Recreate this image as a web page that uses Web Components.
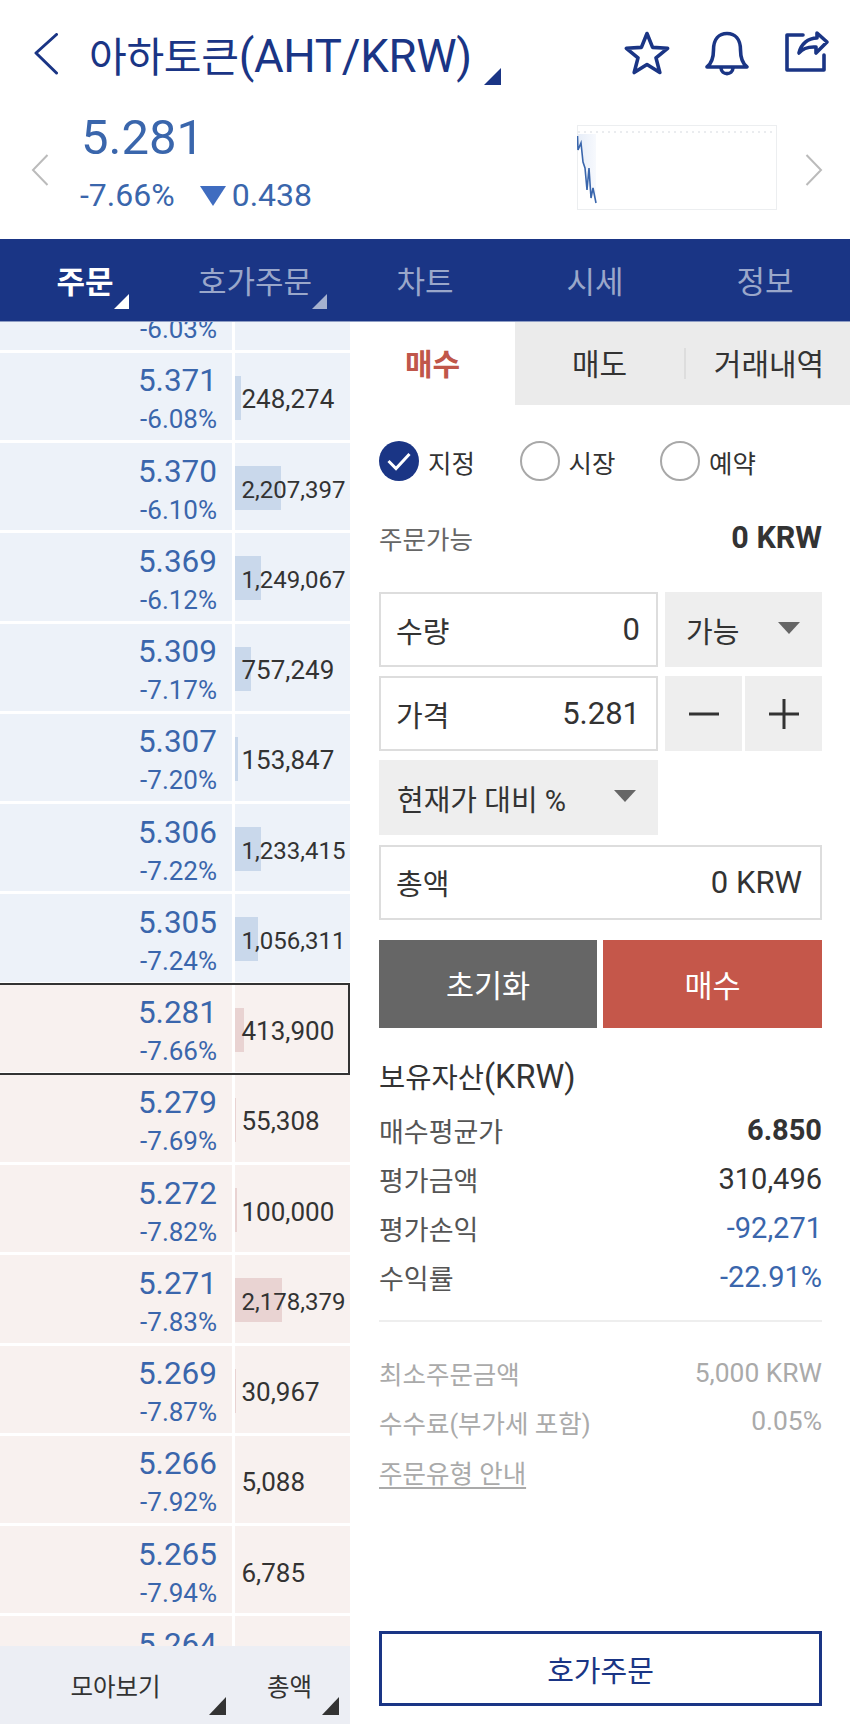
<!DOCTYPE html>
<html lang="ko">
<head>
<meta charset="utf-8">
<title>주문</title>
<style>
  html, body { margin: 0; padding: 0; background: #fff; }
  body { width: 850px; height: 1724px; overflow: hidden; font-family: Roboto, "Noto Sans CJK KR", sans-serif; color: #333; }
  .app { display: flex; flex-direction: column; width: 850px; height: 1724px; }
  .main { display: flex; flex: 1; min-height: 0; }
</style>
</head>
<body>
<div class="app">
  <coin-header name="아하토큰" pair="(AHT/KRW)"></coin-header>
  <coin-quote price="5.281" rate="-7.66%" diff="0.438"></coin-quote>
  <main-tabs></main-tabs>
  <div class="main">
    <order-book></order-book>
    <order-panel></order-panel>
  </div>
</div>

<script>
class CoinHeader extends HTMLElement {
    constructor() {
        super();
        this.attachShadow({ mode: "open" });
        this.shadowRoot.innerHTML = `
            <style>
                :host { display: flex; align-items: flex-start; height: 101px; color: #1a3585; }
                .back { margin: 33px 0 0 34px; width: 24px; height: 42px; stroke-width: 3; }
                .name { margin: 31px 0 0 31px; font-size: 41px; line-height: 52px; white-space: nowrap; letter-spacing: -0.3px; }
                .name span { font-size: 45.5px; }
                .corner { width: 0; height: 0; margin: 68px 0 0 12px; border-left: 17px solid transparent; border-bottom: 17px solid #1a3585; }
                .icons { display: flex; margin-left: auto; }
                svg { display: block; fill: none; stroke: currentColor; stroke-width: 3.6; stroke-linecap: round; stroke-linejoin: round; }
                .icons svg { width: 46px; height: 46px; margin-top: 30px; }
                .star { margin-right: 34px; }
                .bell { margin-right: 34px; }
                .share { margin-right: 20px; }
            </style>
            <svg class="back" viewBox="0 0 24 42"><path d="M22.5 1.5 L2 20 L22.5 40"/></svg>
            <div class="name">${this.getAttribute("name")}<span>${this.getAttribute("pair")}</span></div>
            <div class="corner"></div>
            <div class="icons">
                <svg class="star" viewBox="0 0 46 46"><path d="M23 3.5 L28.6 17.4 L43.6 18.3 L32 27.9 L35.8 42.5 L23 34.5 L10.2 42.5 L14 27.9 L2.4 18.3 L17.4 17.4 Z"/></svg>
                <svg class="bell" viewBox="0 0 46 46"><path d="M3 37 C8 33 9.500 28 9.500 20 C9.500 9 15 3.500 23 3.500 C31 3.500 36.500 9 36.500 20 C36.500 28 38 33 43 37 Z"/><path d="M17 38 C17.500 45.500 28.500 45.500 29 38"/></svg>
                <svg class="share" viewBox="0 0 46 46"><path d="M19 5 H3 V40 H40 V25"/><path d="M33 3 L43 12 L32 23 V17 C24 16.500 19 18 15 23 C17 14 24 8 33 8 Z"/></svg>
            </div>
        `;
    }
}

class CoinQuote extends HTMLElement {
    constructor() {
        super();
        this.attachShadow({ mode: "open" });
        this.shadowRoot.innerHTML = `
            <style>
                :host { display: flex; align-items: center; height: 138px; color: #3a66ac; }
                svg { display: block; fill: none; }
                .arrow { width: 18px; height: 32px; stroke: #bbb; stroke-width: 2; }
                .left { margin: 0 0 0 31px; }
                .vals { margin-left: 31px; display: flex; flex-direction: column; align-self: flex-start; }
                .price { font-size: 49px; line-height: 58px; margin: 8px 0 0 1px; }
                .sub { display: flex; align-items: center; font-size: 32px; line-height: 40px; margin-top: 8px; }
                .tri { width: 0; height: 0; margin: 2px 6px 0 25px; border-left: 13px solid transparent; border-right: 13px solid transparent; border-top: 20px solid #3f6cc0; }
                .spark { margin: 0 0 6px auto; width: 200px; height: 85px; }
                .right { margin: 0 27px 0 28px; }
            </style>
            <svg class="arrow left" viewBox="0 0 18 32"><path d="M16.500 1 L2 16 L16.500 31"/></svg>
            <div class="vals">
                <div class="price">${this.getAttribute("price")}</div>
                <div class="sub"><span>${this.getAttribute("rate")}</span><span class="tri"></span><span>${this.getAttribute("diff")}</span></div>
            </div>
            <svg class="spark" viewBox="0 0 200 85">
                <defs><linearGradient id="sh" x1="0" y1="0" x2="1" y2="0"><stop offset="0" stop-color="#e6edf8"/><stop offset="1" stop-color="#f7f9fd"/></linearGradient></defs>
                <rect x="0.5" y="0.5" width="199" height="84" stroke="#eceef0"/>
                <path d="M1 7 H199" stroke="#e4e6ea" stroke-width="1.500" stroke-dasharray="2 4"/>
                <path d="M1 9 L1 25 L4 18 L6 37 L8 43 L10 65 L12 43 L14 73 L16 63 L19 78 L19 9 Z" fill="url(#sh)"/>
                <path d="M0.500 11 L1 25 L4 18 L6 37 L8 43 L10 65 L12 43 L14 73 L16 63 L19 78" stroke="#3a66ac" stroke-width="1.600"/>
            </svg>
            <svg class="arrow right" viewBox="0 0 18 32"><path d="M1.500 1 L16 16 L1.500 31"/></svg>
        `;
    }
}

class MainTabs extends HTMLElement {
    constructor() {
        super();
        this.attachShadow({ mode: "open" });
        const items = [["주문", 1, 1], ["호가주문", 0, 1], ["차트", 0, 0], ["시세", 0, 0], ["정보", 0, 0]];
        this.shadowRoot.innerHTML = `
            <style>
                :host { display: grid; grid-template-columns: repeat(5, 170px); height: 82px; background: #1a3585; box-shadow: 0 1px 0 #8e9dc4; position: relative; z-index: 2; }
                .tab { display: flex; align-items: center; justify-content: center; position: relative; font-size: 31px; color: #9aa7ca; padding-bottom: 2px; }
                .tab.on { color: #fff; font-weight: 700; }
                .tab i { position: absolute; right: 13px; bottom: 12px; width: 0; height: 0; border-left: 15px solid transparent; border-bottom: 15px solid #a5b1cf; }
                .tab.on i { right: 41px; border-bottom-color: #fff; }
            </style>
            ${items.map(([t, on, mark]) => `<div class="tab${on ? " on" : ""}"><span>${t}</span>${mark ? "<i></i>" : ""}</div>`).join("")}
        `;
    }
}

class OrderRow extends HTMLElement {
    constructor() {
        super();
        this.attachShadow({ mode: "open" });
        const long = (this.getAttribute("vol") || "").length > 7;
        const current = this.hasAttribute("current");
        this.shadowRoot.innerHTML = `
            <style>
                :host { display: grid; grid-template-columns: 232px 115px; grid-template-rows: 87.25px; column-gap: 3px; height: 87.25px; margin-bottom: 3px; position: relative; color: #3a66ac; --cell: #edf2f9; --bar: #c9d8eb; }
                :host([side="sell"]) { --cell: #f8f1ef; --bar: #e9d3d2; }
                :host([current]) { z-index: 1; }
                .p { background: var(--cell); text-align: right; padding-right: 15px; overflow: hidden; }
                .price { font-size: 31.500px; line-height: 38px; height: 38px; margin-top: 9.500px; }
                .rate { font-size: 26px; line-height: 32px; margin-top: 3px; }
                .v { background: var(--cell); position: relative; color: #333; display: flex; align-items: center; }
                .bar { position: absolute; left: 0; top: 23px; height: 44px; background: var(--bar); }
                .num { position: relative; margin: 6px 0 0 6.500px; font-size: ${long ? 24 : 26}px; white-space: nowrap; }
                .frame { position: absolute; left: -3px; right: 0; top: -2px; bottom: -3.500px; border: 2.500px solid #333; }
            </style>
            <div class="p">
                <div class="price">${this.getAttribute("price") || ""}</div>
                <div class="rate">${this.getAttribute("rate") || ""}</div>
            </div>
            <div class="v">
                <div class="bar" style="width:${this.getAttribute("bar") || 0}px"></div>
                <div class="num">${this.getAttribute("vol") || ""}</div>
            </div>
            ${current ? `<div class="frame"></div>` : ""}
        `;
    }
}

class OrderBook extends HTMLElement {
    constructor() {
        super();
        this.attachShadow({ mode: "open" });
        const rows = [
            ["", "-6.03%", "", 0, "buy"],
            ["5.371", "-6.08%", "248,274", 6, "buy"],
            ["5.370", "-6.10%", "2,207,397", 46, "buy"],
            ["5.369", "-6.12%", "1,249,067", 26, "buy"],
            ["5.309", "-7.17%", "757,249", 16, "buy"],
            ["5.307", "-7.20%", "153,847", 3, "buy"],
            ["5.306", "-7.22%", "1,233,415", 26, "buy"],
            ["5.305", "-7.24%", "1,056,311", 23, "buy"],
            ["5.281", "-7.66%", "413,900", 9, "sell", 1],
            ["5.279", "-7.69%", "55,308", 1, "sell"],
            ["5.272", "-7.82%", "100,000", 2, "sell"],
            ["5.271", "-7.83%", "2,178,379", 47, "sell"],
            ["5.269", "-7.87%", "30,967", 1, "sell"],
            ["5.266", "-7.92%", "5,088", 0, "sell"],
            ["5.265", "-7.94%", "6,785", 0, "sell"],
            ["5.264", "", "", 0, "sell"]
        ];
        this.shadowRoot.innerHTML = `
            <style>
                :host { display: flex; flex-direction: column; width: 350px; min-height: 0; }
                .scroll { flex: 1; min-height: 0; overflow: hidden; }
                .list { margin-top: -58.500px; }
                .foot { display: grid; grid-template-columns: 235px 115px; height: 78px; background: #eceef4; color: #333; font-size: 24.500px; flex: none; }
                .foot div { display: flex; align-items: center; justify-content: center; position: relative; }
                .foot i { position: absolute; top: 51px; width: 0; height: 0; border-left: 17px solid transparent; border-bottom: 18px solid #333; }
                .foot .a i { right: 9px; }
                .foot .b i { right: 11px; }
                .foot .a span { margin-left: -4px; }
                .foot .b span { margin-left: -6px; }
            </style>
            <div class="scroll"><div class="list">
                ${rows.map(r => `<order-row price="${r[0]}" rate="${r[1]}" vol="${r[2]}" bar="${r[3]}" side="${r[4]}"${r[5] ? " current" : ""}></order-row>`).join("")}
            </div></div>
            <div class="foot">
                <div class="a"><span>모아보기</span><i></i></div>
                <div class="b"><span>총액</span><i></i></div>
            </div>
        `;
    }
}

class FieldBox extends HTMLElement {
    constructor() {
        super();
        this.attachShadow({ mode: "open" });
        this.shadowRoot.innerHTML = `
            <style>
                :host { display: flex; align-items: center; justify-content: space-between; box-sizing: border-box; height: 75px; border: 2px solid #ddd; padding: 0 16px 0 15px; background: #fff; color: #333; }
                :host(.wide) { padding-right: 18px; }
                .l { font-size: 29px; }
                .v { font-size: 31px; }
            </style>
            <span class="l">${this.getAttribute("label")}</span>
            <span class="v">${this.getAttribute("value")}</span>
        `;
    }
}

class SelectBox extends HTMLElement {
    constructor() {
        super();
        this.attachShadow({ mode: "open" });
        this.shadowRoot.innerHTML = `
            <style>
                :host { display: flex; align-items: center; justify-content: space-between; box-sizing: border-box; height: 75px; padding: 0 22px 0 18px; background: #eee; color: #333; font-size: 29px; }
                i { width: 0; height: 0; margin-top: -4px; border-left: 11px solid transparent; border-right: 11px solid transparent; border-top: 12px solid #666; }
            </style>
            <span><slot></slot></span><i></i>
        `;
    }
}

class RadioItem extends HTMLElement {
    constructor() {
        super();
        this.attachShadow({ mode: "open" });
        const on = this.hasAttribute("checked");
        this.shadowRoot.innerHTML = `
            <style>
                :host { display: flex; align-items: center; gap: 9px; font-size: 25.500px; color: #333; }
                svg { display: block; width: 40px; height: 40px; }
            </style>
            <svg viewBox="0 0 40 40">
                ${on ? `<circle cx="20" cy="20" r="20" fill="#1a3585"/><path d="M9.500 20 L17 27.500 L30.500 13" fill="none" stroke="#fff" stroke-width="3"/>`
                     : `<circle cx="20" cy="20" r="19" fill="#fff" stroke="#a8a8a8" stroke-width="2"/>`}
            </svg>
            <span><slot></slot></span>
        `;
    }
}

class InfoRow extends HTMLElement {
    constructor() {
        super();
        this.attachShadow({ mode: "open" });
        this.shadowRoot.innerHTML = `
            <style>
                :host { display: flex; align-items: center; justify-content: space-between; height: 49px; font-size: 27px; color: #555; }
                :host([muted]) { height: 48.500px; color: #aaa; font-size: 25.500px; }
                .v { font-size: 29px; color: #333; }
                :host([muted]) .v { font-size: 26.400px; color: #aaa; }
                :host([tone="blue"]) .v { color: #3a66ac; }
                :host([tone="bold"]) .v { font-weight: 700; }
            </style>
            <span>${this.getAttribute("label")}</span>
            <span class="v">${this.getAttribute("value")}</span>
        `;
    }
}

class OrderPanel extends HTMLElement {
    constructor() {
        super();
        this.attachShadow({ mode: "open" });
        this.shadowRoot.innerHTML = `
            <style>
                :host { display: flex; flex-direction: column; width: 500px; position: relative; }
                .tabs { display: grid; grid-template-columns: 165px 169px 166px; height: 83px; margin-top: 1px; font-size: 30px; color: #333; flex: none; }
                .tabs div { display: flex; align-items: center; justify-content: center; background: #ebebeb; padding-bottom: 4px; }
                .tabs .on { background: #fff; color: #c0564a; font-weight: 700; }
                .tabs .last { position: relative; padding-left: 4px; }
                .tabs .last::before { content: ""; position: absolute; left: 0; top: 26px; height: 31px; width: 2px; background: #ddd; }
                .body { display: flex; flex-direction: column; flex: 1; padding: 0 28px 18px 29px; }
                .radios { display: flex; margin-top: 36px; height: 40px; }
                .radios radio-item { width: 140.500px; }
                .avail { display: flex; justify-content: space-between; align-items: center; margin-top: 36px; height: 40px; font-size: 25.500px; color: #666; }
                .avail b { font-size: 30.500px; color: #333; }
                .form { display: grid; grid-template-columns: 279px 157px; column-gap: 7px; row-gap: 9.200px; margin-top: 35px; }
                .wide { grid-column: 1 / 3; }
                .step { display: grid; grid-template-columns: 77px 77px; column-gap: 3px; }
                .step div { background: #eee; display: flex; align-items: center; justify-content: center; }
                .step svg { width: 30px; height: 30px; stroke: #333; stroke-width: 3; }
                .btns { display: grid; grid-template-columns: 218px 219px; column-gap: 6px; height: 88px; margin-top: 20px; }
                .btns div { display: flex; align-items: center; justify-content: center; color: #fff; font-size: 30.500px; }
                .reset { background: #666; }
                .buy { background: #c5574a; }
                h2 { margin: 29px 0 0; height: 40px; line-height: 40px; font-size: 28.500px; font-weight: 400; color: #333; }
                h2 span { font-size: 32.500px; }
                .assets { margin-top: 9px; }
                hr { margin: 18px 0 0; border: 0; height: 2px; background: #eee; }
                .fees { margin-top: 27px; }
                .guide { margin-top: 6px; font-size: 25.500px; line-height: 44px; color: #aaa; text-decoration: underline; text-underline-offset: 4px; }
                .hoga { margin-top: auto; box-sizing: border-box; height: 75px; border: 3px solid #1a3585; color: #1a3585; font-size: 29px; display: flex; align-items: center; justify-content: center; }
            </style>
            <div class="tabs">
                <div class="on">매수</div>
                <div>매도</div>
                <div class="last">거래내역</div>
            </div>
            <div class="body">
                <div class="radios">
                    <radio-item checked>지정</radio-item>
                    <radio-item>시장</radio-item>
                    <radio-item>예약</radio-item>
                </div>
                <div class="avail"><span>주문가능</span><b>0 KRW</b></div>
                <div class="form">
                    <field-box label="수량" value="0"></field-box>
                    <select-box style="padding-left:21px">가능</select-box>
                    <field-box label="가격" value="5.281"></field-box>
                    <div class="step">
                        <div><svg viewBox="0 0 30 30"><path d="M0 15 H30"/></svg></div>
                        <div><svg viewBox="0 0 30 30"><path d="M0 15 H30 M15 0 V30"/></svg></div>
                    </div>
                    <select-box>현재가 대비 %</select-box>
                    <div></div>
                    <field-box class="wide" label="총액" value="0 KRW"></field-box>
                </div>
                <div class="btns">
                    <div class="reset">초기화</div>
                    <div class="buy">매수</div>
                </div>
                <h2>보유자산<span>(KRW)</span></h2>
                <div class="assets">
                    <info-row label="매수평균가" value="6.850" tone="bold"></info-row>
                    <info-row label="평가금액" value="310,496"></info-row>
                    <info-row label="평가손익" value="-92,271" tone="blue"></info-row>
                    <info-row label="수익률" value="-22.91%" tone="blue"></info-row>
                </div>
                <hr>
                <div class="fees">
                    <info-row muted label="최소주문금액" value="5,000 KRW"></info-row>
                    <info-row muted label="수수료(부가세 포함)" value="0.05%"></info-row>
                </div>
                <div class="guide">주문유형 안내</div>
                <div class="hoga">호가주문</div>
            </div>
        `;
    }
}

customElements.define("coin-header", CoinHeader);
customElements.define("coin-quote", CoinQuote);
customElements.define("main-tabs", MainTabs);
customElements.define("order-row", OrderRow);
customElements.define("order-book", OrderBook);
customElements.define("field-box", FieldBox);
customElements.define("select-box", SelectBox);
customElements.define("radio-item", RadioItem);
customElements.define("info-row", InfoRow);
customElements.define("order-panel", OrderPanel);
</script>
</body>
</html>
